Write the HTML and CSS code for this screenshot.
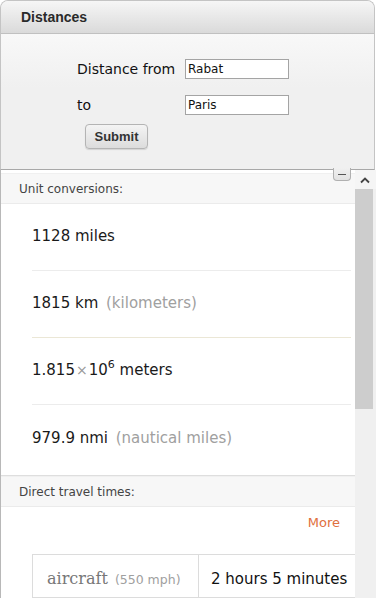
FILE: index.html
```html
<!DOCTYPE html>
<html>
<head>
<meta charset="utf-8">
<link rel="stylesheet" href="styles.css">
</head>
<body>
<div class="widget">
  <div class="panel">
    <div class="panel-head">Distances</div>
    <div class="panel-body">
      <div class="form-grid">
        <label class="lbl">Distance from</label>
        <div class="field">Rabat</div>
        <label class="lbl">to</label>
        <div class="field">Paris</div>
      </div>
      <div class="submit">Submit</div>
    </div>
  </div>
  <div class="results">
    <div class="pane">
      <div class="section">
        <div class="sec-head">Unit conversions:</div>
        <div class="row">1128 miles</div>
        <div class="row">1815 km <span class="note">(kilometers)</span></div>
        <div class="row row-yel">1.815<span class="times">×</span>10<sup class="exp">6</sup> meters</div>
        <div class="row row-last">979.9 nmi <span class="note">(nautical miles)</span></div>
      </div>
      <div class="section2">
        <div class="sec-head">Direct travel times:</div>
        <div class="more-line"><span class="more">More</span></div>
        <div class="table">
          <div class="cell c1"><span class="vehicle">aircraft</span> <span class="speed">(550 mph)</span></div>
          <div class="cell c2">2 hours 5 minutes</div>
        </div>
      </div>
    </div>
    <div class="scrollbar">
      <div class="sb-arrow">
        <svg width="12" height="8" viewBox="0 0 12 8"><path d="M2 6.5 L6 2.5 L10 6.5" fill="none" stroke="#444" stroke-width="1.8"/></svg>
      </div>
      <div class="sb-thumb"></div>
      <div class="sb-track"></div>
    </div>
    <div class="collapse"><span class="dash"></span></div>
  </div>
</div>
</body>
</html>
```
FILE: styles.css
```css
html, body {
  margin: 0;
  padding: 0;
  background: #ffffff;
}
.widget {
  width: 376px;
  height: 598px;
  overflow: hidden;
  font-family: "DejaVu Sans", Verdana, sans-serif;
  color: #222;
}
.panel {
  height: 168px;
  border: 1px solid #c4c4c4;
  border-bottom: 1px solid #a8a8a8;
  border-radius: 8px 8px 0 0;
  background: #f0f0f0;
  overflow: hidden;
  margin-right: 1px;
}
.panel-head {
  height: 32px;
  border-bottom: 1px solid #c0c0c0;
  background: linear-gradient(#f6f6f6, #dadada);
  font-family: "Liberation Sans", Arial, sans-serif;
  font-weight: bold;
  font-size: 14px;
  color: #2a2a2a;
  line-height: 33px;
  padding-left: 20px;
}
.panel-body {
  padding: 25px 0 0 76px;
  background: linear-gradient(#f8f8f8, #f0f0f0 40%);
  height: 109px;
}
.form-grid {
  display: grid;
  grid-template-columns: 108px 104px;
  grid-auto-rows: 20px;
  row-gap: 16px;
  align-items: center;
}
.lbl {
  font-size: 14px;
  color: #111;
  font-family: "DejaVu Sans", Verdana, sans-serif;
}
.field {
  box-sizing: border-box;
  height: 20px;
  border: 1px solid #a4a4a4;
  background: #fff;
  font-family: "DejaVu Sans", sans-serif;
  font-size: 12px;
  line-height: 18px;
  padding-left: 2px;
  color: #111;
}
.submit {
  box-sizing: border-box;
  margin: 9px 0 0 8px;
  width: 63px;
  height: 25px;
  border: 1px solid #b4b4b4;
  border-radius: 4px;
  background: linear-gradient(#f4f4f4, #dcdcdc);
  font-family: "Liberation Sans", Arial, sans-serif;
  font-weight: bold;
  font-size: 13px;
  color: #333;
  text-align: center;
  line-height: 23px;
  box-shadow: 0 1px 1px rgba(0,0,0,0.12);
}
.results {
  position: relative;
  display: flex;
  height: 429px;
}
.pane {
  width: 354px;
  border-left: 1px solid #b8b8b8;
  overflow: hidden;
  padding-top: 3px;
  background: #fff;
}
.section {
  border-bottom: 1px solid #dedede;
}
.sec-head {
  height: 29px;
  background: #f7f7f7;
  border-top: 1px solid #f0f0f0;
  border-bottom: 1px solid #ebebeb;
  padding-left: 18px;
  font-size: 12px;
  line-height: 30px;
  color: #444;
}
.row {
  height: 66px;
  margin: 0 4px 0 31px;
  border-bottom: 1px solid #ececec;
  font-size: 15px;
  line-height: 64px;
  color: #1a1a1a;
  white-space: nowrap;
}
.row-yel {
  border-bottom-color: #ececec;
}
.row:nth-child(3) {
  border-bottom-color: #ebe7d6;
}
.row-last {
  border-bottom: none;
  height: 70px;
  line-height: 66px;
}
.note {
  color: #a0a0a0;
  margin-left: 3px;
}
.times {
  color: #999;
  font-size: 14px;
  margin: 0 1px;
}
.exp {
  font-size: 11px;
  line-height: 0;
  vertical-align: 7px;
}
.section2 {
  white-space: nowrap;
}
.more-line {
  height: 30px;
  text-align: right;
  padding-right: 15px;
  line-height: 30px;
}
.more {
  color: #df7040;
  font-size: 13px;
}
.table {
  display: flex;
  margin: 17px 0 0 31px;
  border-top: 1px solid #dcdcdc;
  border-left: 1px solid #dcdcdc;
  width: 400px;
}
.cell {
  height: 42px;
  line-height: 48px;
  border-right: 1px solid #dcdcdc;
  border-bottom: 1px solid #dcdcdc;
  flex: none;
}
.c1 {
  width: 151px;
  padding-left: 14px;
}
.c2 {
  width: 220px;
  padding-left: 12px;
  font-size: 15px;
  color: #111;
}
.vehicle {
  font-family: "DejaVu Serif", serif;
  font-size: 16px;
  color: #777;
}
.speed {
  font-size: 12.5px;
  color: #a0a0a0;
  margin-left: 2px;
}
.scrollbar {
  width: 21px;
  display: flex;
  flex-direction: column;
  background: #f0f0f0;
}
.sb-arrow {
  height: 19px;
  background: #f5f5f5;
  display: flex;
  align-items: center;
  justify-content: center;
  padding-right: 2px;
}
.sb-thumb {
  height: 220px;
  background: #cdcdcd;
  margin-right: 3px;
}
.sb-track {
  flex: 1;
  background: #f0f0f0;
}
.collapse {
  position: absolute;
  left: 333px;
  top: -2px;
  width: 16px;
  height: 12px;
  border: 1px solid #b0b0b0;
  border-top: none;
  border-radius: 0 0 4px 4px;
  background: linear-gradient(#f0f0f0, #e2e2e2);
  display: flex;
  align-items: center;
  justify-content: center;
}
.dash {
  width: 8px;
  height: 1px;
  background: #555;
}
```
